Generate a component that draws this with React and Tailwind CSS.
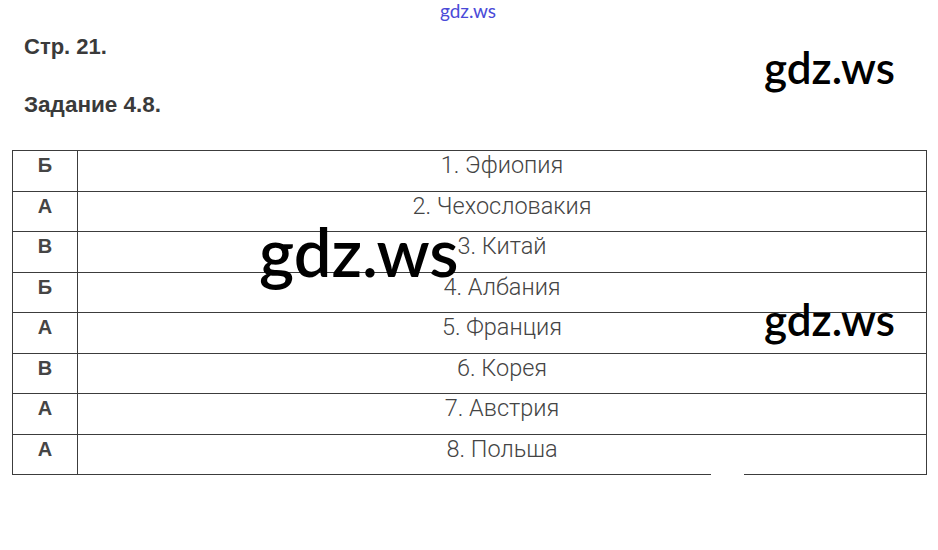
import React from "react";

const rows = [
  ["Б", "1. Эфиопия"],
  ["А", "2. Чехословакия"],
  ["В", "3. Китай"],
  ["Б", "4. Албания"],
  ["А", "5. Франция"],
  ["В", "6. Корея"],
  ["А", "7. Австрия"],
  ["А", "8. Польша"],
];

export default function App() {
  return (
    <div className="relative w-[938px] h-[550px] bg-white overflow-hidden" style={{ fontFamily: '"Liberation Sans", Arial, sans-serif' }}>
      <div className="flex justify-center">
        <span className="text-[19px] leading-[22px] text-[#4a4ad8] ml-[-2px]" style={{ fontFamily: 'Lato, sans-serif' }}>gdz.ws</span>
      </div>
      <div className="pl-[24px] pt-[12px] text-[22px] leading-[26px] font-bold text-[#3a3a3a]">Стр. 21.</div>
      <div className="pl-[24px] pt-[32px] text-[22.5px] leading-[26px] font-bold text-[#3a3a3a]">Задание 4.8.</div>
      <div className="ml-[12px] mt-[32px] w-[915px] border-t border-l border-r border-[#3c3c3c]">
        {rows.map(([l, r], i) => (
          <div key={i} className="flex h-[40.5px] border-b border-[#3c3c3c]">
            <div className="w-[65px] shrink-0 border-r border-[#3c3c3c] text-center pt-[1px] text-[20px] leading-[26px] font-bold text-[#454545]">{l}</div>
            <div className="flex-1 text-center text-[23.5px] leading-[28px] font-light text-[#444]" style={{ fontFamily: 'Roboto, sans-serif' }}>{r}</div>
          </div>
        ))}
      </div>
      <div className="absolute left-[711px] top-[470px] w-[33px] h-[8px] bg-white"></div>
      <span className="absolute left-[764px] top-[42px] text-[44px] leading-[50px] font-semibold text-black" style={{ fontFamily: 'Lato, sans-serif' }}>gdz.ws</span>
      <span className="absolute left-[259px] top-[214px] text-[67px] leading-[74px] font-semibold text-black" style={{ fontFamily: 'Lato, sans-serif' }}>gdz.ws</span>
      <span className="absolute left-[764px] top-[294px] text-[44px] leading-[50px] font-semibold text-black" style={{ fontFamily: 'Lato, sans-serif' }}>gdz.ws</span>
    </div>
  );
}
